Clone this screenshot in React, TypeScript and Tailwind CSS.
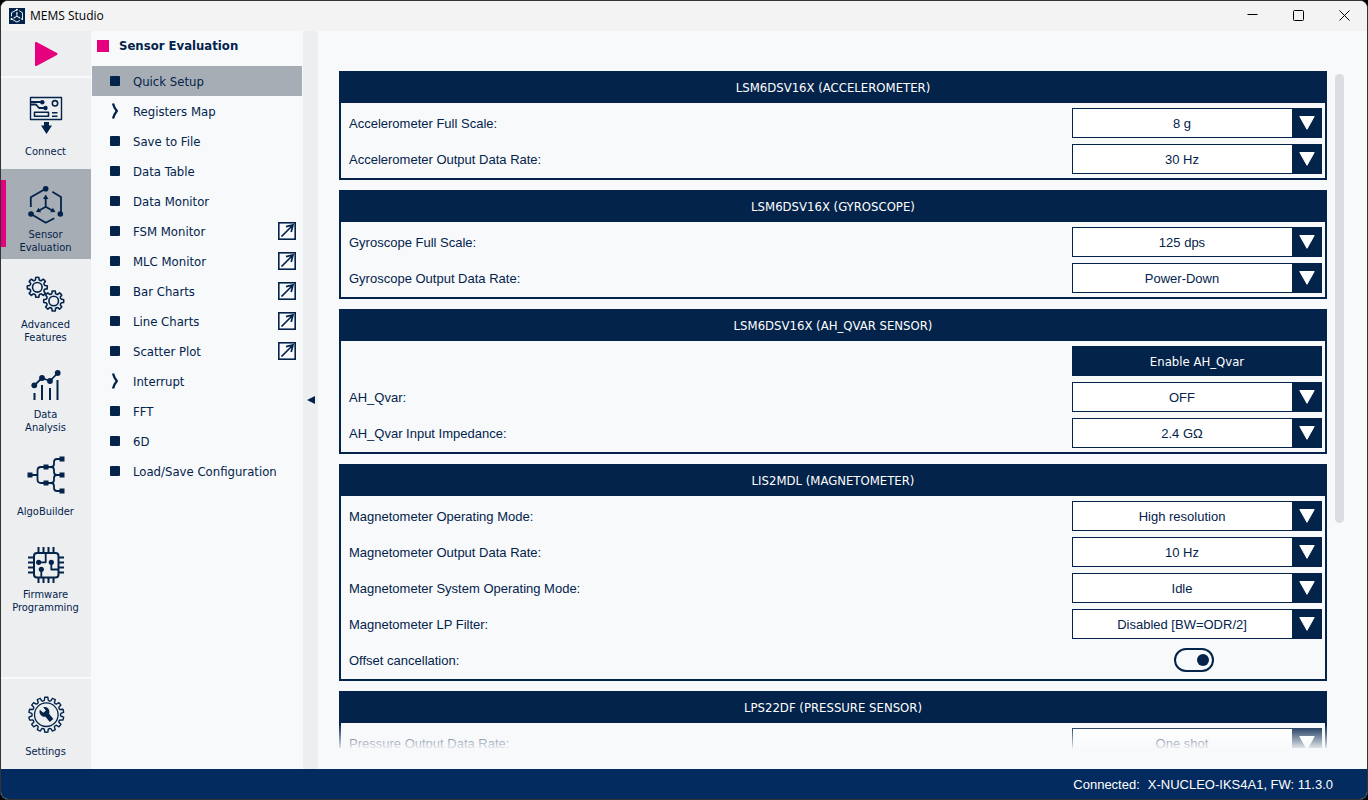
import type { ReactNode } from "react";

const NAVY = "#03234b";

function gearPath(cx: number, cy: number, outer: number, inner: number, teeth: number) {
  const step = (Math.PI * 2) / teeth;
  const point = (r: number, a: number) =>
    `${(cx + r * Math.sin(a)).toFixed(2)} ${(cy - r * Math.cos(a)).toFixed(2)}`;
  let d = "";
  for (let i = 0; i < teeth; i++) {
    const a = i * step;
    d += `${i === 0 ? "M" : "L"}${point(inner, a - step * 0.3)}`;
    d += `L${point(outer, a - step * 0.2)}`;
    d += `A${outer} ${outer} 0 0 1 ${point(outer, a + step * 0.2)}`;
    d += `L${point(inner, a + step * 0.3)}`;
    d += `A2.5 2.5 0 0 0 ${point(inner, a + step * 0.7)}`;
  }
  return d + "Z";
}

function RailIcon({ children }: { children: ReactNode }) {
  return (
    <svg
      className="h-9 w-9 overflow-visible"
      viewBox="0 0 36 36"
      fill="none"
      stroke={NAVY}
      strokeWidth="1.8"
      strokeLinejoin="round"
      aria-hidden="true"
    >
      {children}
    </svg>
  );
}

const ConnectIcon = () => (
  <RailIcon>
    <rect x="2.5" y="0.5" width="31" height="22" strokeWidth="1.4" />
    <path d="M3 5h11M3 7.500h5l3 3.500h6" />
    <g fill={NAVY} stroke="none">
      <circle cx="14.3" cy="5.3" r="2.2" />
      <circle cx="17.5" cy="11" r="2.2" />
      <path d="M16 25h5v3.500h3L18.500 37 13 28.500h3z" />
    </g>
    <circle cx="27" cy="6.3" r="2.7" strokeWidth="1.6" />
    <rect x="6.5" y="15.3" width="14" height="4" strokeWidth="1.6" />
    <path d="M24 15.800h5.500M24 19.200h5.500" strokeWidth="1.4" />
  </RailIcon>
);

const SensorShape = ({ color = NAVY }: { color?: string }) => (
  <g stroke={color} fill="none">
    <path d="M2.800 20V10.200L17.700 1.700M24.300 4.700L33 10v17M3 27l14.700 8.700 8.600-4.500" />
    <path d="M17.700 10v9.700l-7 4M17.700 19.700l7 4" />
    <g fill={color} stroke="none">
      <circle cx="17.7" cy="1.7" r="2.8" />
      <circle cx="3" cy="27" r="2.8" />
      <circle cx="32.3" cy="27" r="2.8" />
      <path d="M17.700 7.500l2.700 4.500h-5.400zM8 25l2.500-4.300 2.600 4.500zM27.400 25l-2.500-4.300-2.600 4.500z" />
    </g>
  </g>
);

const SensorIcon = () => (
  <RailIcon>
    <SensorShape />
  </RailIcon>
);

const GearsIcon = () => (
  <RailIcon>
    <path d={gearPath(9.3, 10.3, 10, 7.8, 8)} strokeWidth="1.6" />
    <circle cx="9.3" cy="10.3" r="4.8" strokeWidth="1.6" />
    <path d={gearPath(25.7, 24, 10, 7.8, 8)} strokeWidth="1.6" />
    <circle cx="25.7" cy="24" r="4.8" strokeWidth="1.6" />
  </RailIcon>
);

const AnalysisIcon = () => (
  <RailIcon>
    <path d="M6.500 26v7M14 18v15M22 21v12M29.500 13v20" strokeWidth="2" />
    <path d="M6.300 18.300L14 11l8 3 7.700-8" />
    <g fill={NAVY} stroke="none">
      <circle cx="6.3" cy="18.3" r="2.9" />
      <circle cx="14" cy="11" r="2.9" />
      <circle cx="22" cy="14" r="2.9" />
      <circle cx="29.7" cy="6" r="2.9" />
    </g>
  </RailIcon>
);

const AlgoIcon = () => (
  <RailIcon>
    <path d="M2 18h7.500M18 10h-5q-3.500 0-3.500 3.500v9q0 3.500 3.500 3.500h5" />
    <path d="M18 10h5q3 0 3-3V5q0-3 3-3h5M23 10q3 0 3 3v2q0 3 3 3h5M18 26h5q3 0 3-3v-2q0-3 3-3M23 26q3 0 3 3v2q0 3 3 3h5" />
    <path
      d="M-.5 15.500h5v5h-5zM15.500 7.500h5v5h-5zM15.500 23.500h5v5h-5zM31.500-.5h5v5h-5zM31.500 15.500h5v5h-5zM31.500 31.500h5v5h-5z"
      fill={NAVY}
      stroke="none"
    />
  </RailIcon>
);

const FirmwareIcon = () => (
  <RailIcon>
    <rect x="6" y="6" width="24.5" height="24.5" rx="3" strokeWidth="2" />
    <path
      d="M10.500 0v6M15.500 0v6M20.500 0v6M25.500 0v6M10.500 30v6M15.500 30v6M20.500 30v6M25.500 30v6M0 10.500h6M0 15.500h6M0 20.500h6M0 25.500h6M30 10.500h6M30 15.500h6M30 20.500h6M30 25.500h6"
      strokeWidth="2"
    />
    <path d="M10.700 15.300h7V6M23.300 15.300V22.500H30M13.300 22.300V30" />
    <g fill={NAVY} stroke="none">
      <circle cx="10.7" cy="15.3" r="2.6" />
      <circle cx="23.3" cy="15.3" r="2.6" />
      <circle cx="13.3" cy="22.3" r="2.6" />
    </g>
  </RailIcon>
);

const SettingsIcon = () => (
  <RailIcon>
    <path d={gearPath(18.3, 17.7, 17.5, 14.6, 14)} strokeWidth="1.4" />
    <circle cx="18.3" cy="17.7" r="11.8" strokeWidth="1.3" />
    <path
      d="M15.200 10.200c3-.9 6.200 1.300 6.200 4.600 0 .8-.1 1.300-.3 1.900l4.200 5.200-3.500 3-4.300-5.200c-3.200.4-6-1.900-6-5 0-.8.1-1.300.4-2l3.400 3 2.600-2.300z"
      fill={NAVY}
      stroke="none"
    />
  </RailIcon>
);

const RAIL: { lines: string[]; icon: ReactNode; active?: boolean }[] = [
  { lines: ["Connect"], icon: <ConnectIcon /> },
  { lines: ["Sensor", "Evaluation"], icon: <SensorIcon />, active: true },
  { lines: ["Advanced", "Features"], icon: <GearsIcon /> },
  { lines: ["Data", "Analysis"], icon: <AnalysisIcon /> },
  { lines: ["AlgoBuilder"], icon: <AlgoIcon /> },
  { lines: ["Firmware", "Programming"], icon: <FirmwareIcon /> },
];

function RailButton({ lines, icon, active }: { lines: string[]; icon: ReactNode; active?: boolean }) {
  return (
    <button
      type="button"
      className={`relative flex h-[90px] w-full shrink-0 flex-col items-center gap-[5px] pt-[18px] ${
        active ? "bg-[#a6adb4]" : ""
      }`}
    >
      {active && <span className="absolute top-[11px] left-0 h-[67px] w-[5px] bg-[#e6007e]" />}
      {icon}
      <span className="flex h-[26px] flex-col items-center justify-center pr-px text-[11px] leading-[13px]">
        {lines.map((l) => (
          <span key={l}>{l}</span>
        ))}
      </span>
    </button>
  );
}

const NAV: { label: string; kind?: "group" | "window"; active?: boolean }[] = [
  { label: "Quick Setup", active: true },
  { label: "Registers Map", kind: "group" },
  { label: "Save to File" },
  { label: "Data Table" },
  { label: "Data Monitor" },
  { label: "FSM Monitor", kind: "window" },
  { label: "MLC Monitor", kind: "window" },
  { label: "Bar Charts", kind: "window" },
  { label: "Line Charts", kind: "window" },
  { label: "Scatter Plot", kind: "window" },
  { label: "Interrupt", kind: "group" },
  { label: "FFT" },
  { label: "6D" },
  { label: "Load/Save Configuration" },
];

function NavItem({ label, kind, active }: (typeof NAV)[number]) {
  return (
    <li className={`flex h-[30px] items-center pr-1.5 pl-[18px] ${active ? "bg-[#a6adb4]" : ""}`}>
      <a href="#" className="flex flex-1 items-center gap-[13px]">
        {kind === "group" ? (
          <svg className="h-4 w-[10px]" viewBox="0 0 10 16" fill="none" stroke={NAVY} strokeWidth="2.3" aria-hidden="true">
            <path d="M3 .5Q4 4.500 6.800 8Q4 11.500 3 15.500" />
          </svg>
        ) : (
          <span className="h-[10px] w-[10px] rounded-[1px] bg-[#03234b]" />
        )}
        <span className="pt-0.5">{label}</span>
      </a>
      {kind === "window" && (
        <button type="button" aria-label={`Open ${label} in a new window`}>
          <svg className="block h-[18px] w-[18px]" viewBox="0 0 18 18" fill="none" stroke={NAVY} aria-hidden="true">
            <rect x=".8" y=".8" width="16.4" height="16.4" strokeWidth="1.6" />
            <path d="M3.500 14.500L14.500 3.500M8 4.700L15 3L13.200 10" strokeWidth="1.7" />
          </svg>
        </button>
      )}
    </li>
  );
}

type Row =
  | { type: "select"; label: string; value: string }
  | { type: "button"; label: string }
  | { type: "toggle"; label: string };

const PANELS: { title: string; rows: Row[] }[] = [
  {
    title: "LSM6DSV16X (ACCELEROMETER)",
    rows: [
      { type: "select", label: "Accelerometer Full Scale:", value: "8 g" },
      { type: "select", label: "Accelerometer Output Data Rate:", value: "30 Hz" },
    ],
  },
  {
    title: "LSM6DSV16X (GYROSCOPE)",
    rows: [
      { type: "select", label: "Gyroscope Full Scale:", value: "125 dps" },
      { type: "select", label: "Gyroscope Output Data Rate:", value: "Power-Down" },
    ],
  },
  {
    title: "LSM6DSV16X (AH_QVAR SENSOR)",
    rows: [
      { type: "button", label: "Enable AH_Qvar" },
      { type: "select", label: "AH_Qvar:", value: "OFF" },
      { type: "select", label: "AH_Qvar Input Impedance:", value: "2.4 GΩ" },
    ],
  },
  {
    title: "LIS2MDL (MAGNETOMETER)",
    rows: [
      { type: "select", label: "Magnetometer Operating Mode:", value: "High resolution" },
      { type: "select", label: "Magnetometer Output Data Rate:", value: "10 Hz" },
      { type: "select", label: "Magnetometer System Operating Mode:", value: "Idle" },
      { type: "select", label: "Magnetometer LP Filter:", value: "Disabled [BW=ODR/2]" },
      { type: "toggle", label: "Offset cancellation:" },
    ],
  },
  {
    title: "LPS22DF (PRESSURE SENSOR)",
    rows: [{ type: "select", label: "Pressure Output Data Rate:", value: "One shot" }],
  },
];

const fieldId = (label: string) => label.toLowerCase().replace(/[^a-z0-9]+/g, "-");

function SettingRow({ row }: { row: Row }) {
  if (row.type === "button") {
    return (
      <div className="flex h-[30px] justify-end">
        <button
          type="button"
          className="w-[250px] bg-[#03234b] pt-0.5 font-['DejaVu_Sans_Condensed',sans-serif] text-white"
        >
          {row.label}
        </button>
      </div>
    );
  }
  const id = fieldId(row.label);
  return (
    <div className="flex h-[30px] items-center justify-between">
      <label htmlFor={id} className="pt-0.5">
        {row.label}
      </label>
      {row.type === "select" ? (
        <div className="relative h-full w-[250px]">
          <select
            id={id}
            defaultValue={row.value}
            className="h-full w-full appearance-none border border-[#03234b] bg-white pt-0.5 pr-[30px] [text-align-last:center]"
          >
            <option>{row.value}</option>
          </select>
          <span className="pointer-events-none absolute inset-y-0 right-0 flex w-[30px] items-center justify-center bg-[#03234b]">
            <svg className="h-4 w-4" viewBox="0 0 16 16" fill="#fff" stroke="#fff" strokeLinejoin="round" aria-hidden="true">
              <path d="M.8 1.500h14.400L8 14.300z" />
            </svg>
          </span>
        </div>
      ) : (
        <div className="flex w-[250px] justify-center pr-1.5">
          <span className="relative flex">
            <input
              id={id}
              type="checkbox"
              role="switch"
              defaultChecked
              className="peer h-6 w-10 appearance-none rounded-full border-2 border-[#03234b]"
            />
            <span className="pointer-events-none absolute top-1.5 left-[5px] h-3 w-3 rounded-full bg-[#03234b] peer-checked:left-[23px]" />
          </span>
        </div>
      )}
    </div>
  );
}

const WINDOW_CONTROLS = [
  { name: "Minimize", d: "M.5 4.500h10" },
  { name: "Maximize", d: "M1.500.5h8a1 1 0 0 1 1 1v8a1 1 0 0 1-1 1h-8a1 1 0 0 1-1-1v-8a1 1 0 0 1 1-1z" },
  { name: "Close", d: "M.5.5l10 10M10.500.5l-10 10" },
];

function TitleBar() {
  return (
    <header className="flex h-[30px] shrink-0 items-center justify-between bg-[#f3f3f3] text-black">
      <div className="flex items-center gap-[5px] pb-px pl-2 font-['Open_Sans',sans-serif] text-xs">
        <svg className="h-4 w-4 bg-[#03234b]" viewBox="-4 -3 44 44" strokeWidth="2.6" aria-hidden="true">
          <SensorShape color="#fff" />
        </svg>
        <h1>MEMS Studio</h1>
      </div>
      <div className="flex h-full pb-px">
        {WINDOW_CONTROLS.map(({ name, d }) => (
          <button key={name} type="button" aria-label={name} className="flex w-[46px] items-center justify-center">
            <svg className="h-[11px] w-[11px]" viewBox="0 0 11 11" fill="none" stroke="#000" aria-hidden="true">
              <path d={d} />
            </svg>
          </button>
        ))}
      </div>
    </header>
  );
}

export default function App() {
  return (
    <div className="h-screen bg-black">
      <div className="flex h-full flex-col overflow-hidden rounded-lg border border-[#333] bg-[#f7f9fb] font-['DejaVu_Sans_Condensed',sans-serif] text-[13px] text-[#03234b]">
        <TitleBar />
        <div className="flex min-h-0 flex-1">
          <aside className="flex w-[90px] shrink-0 flex-col bg-[#edeef0]">
            <button type="button" aria-label="Start" className="flex h-[45px] shrink-0 items-center justify-center pr-px">
              <svg className="h-[26px] w-6" viewBox="0 0 24 26" fill="#e6007e" stroke="#e6007e" strokeWidth="2" strokeLinejoin="round" aria-hidden="true">
                <path d="M2 2l20.500 11L2 24z" />
              </svg>
            </button>
            <div className="mb-px h-0.5 shrink-0 bg-[#f9fafb]" />
            {RAIL.map((item) => (
              <RailButton key={item.lines[0]} {...item} />
            ))}
            <div className="mt-auto h-0.5 shrink-0 bg-[#f9fafb]" />
            <RailButton lines={["Settings"]} icon={<SettingsIcon />} />
          </aside>

          <nav className="w-[212px] shrink-0 px-px">
            <h2 className="flex h-[35px] items-center gap-[10px] pb-1.5 pl-[5px] font-bold">
              <span className="h-3 w-3 bg-[#e6007e]" />
              Sensor Evaluation
            </h2>
            <ul>
              {NAV.map((item) => (
                <NavItem key={item.label} {...item} />
              ))}
            </ul>
          </nav>

          <button type="button" aria-label="Collapse navigation" className="flex w-[15px] shrink-0 items-center justify-center bg-[#edeef0]">
            <svg className="h-2 w-2" viewBox="0 0 8 8" fill={NAVY} aria-hidden="true">
              <path d="M8 0v8L0 4z" />
            </svg>
          </button>

          <main className="flex min-w-0 flex-1 gap-2 pt-10 pr-[23px] pb-[21px] pl-[21px] font-['Liberation_Sans',Arial,sans-serif]">
            <div className="relative min-w-0 flex-1">
              <div className="flex h-full flex-col gap-[10px] overflow-y-auto [scrollbar-width:none]">
                {PANELS.map((panel) => (
                  <section key={panel.title} className="shrink-0 border-2 border-t-0 border-[#03234b]">
                    <h3 className="flex h-8 items-center justify-center bg-[#03234b] pt-0.5 font-['DejaVu_Sans_Condensed',sans-serif] text-white">
                      {panel.title}
                    </h3>
                    <div className="flex flex-col gap-1.5 pt-[5px] pr-[3px] pb-1 pl-2">
                      {panel.rows.map((row) => (
                        <SettingRow key={row.label} row={row} />
                      ))}
                    </div>
                  </section>
                ))}
              </div>
              <div className="pointer-events-none absolute inset-x-0 bottom-0 h-6 bg-linear-to-b from-[#f7f9fb]/0 to-[#f7f9fb]/90" />
            </div>
            <div className="w-[9px] pt-[3px]">
              <div className="h-2/3 rounded-full bg-[#dadde2]" />
            </div>
          </main>
        </div>
        <footer className="flex h-[30px] shrink-0 items-center justify-end gap-2 bg-[#032b5f] pt-0.5 pr-[34px] font-['Liberation_Sans',Arial,sans-serif] text-white">
          <span>Connected:</span>
          <span>X-NUCLEO-IKS4A1, FW: 11.3.0</span>
        </footer>
      </div>
    </div>
  );
}
